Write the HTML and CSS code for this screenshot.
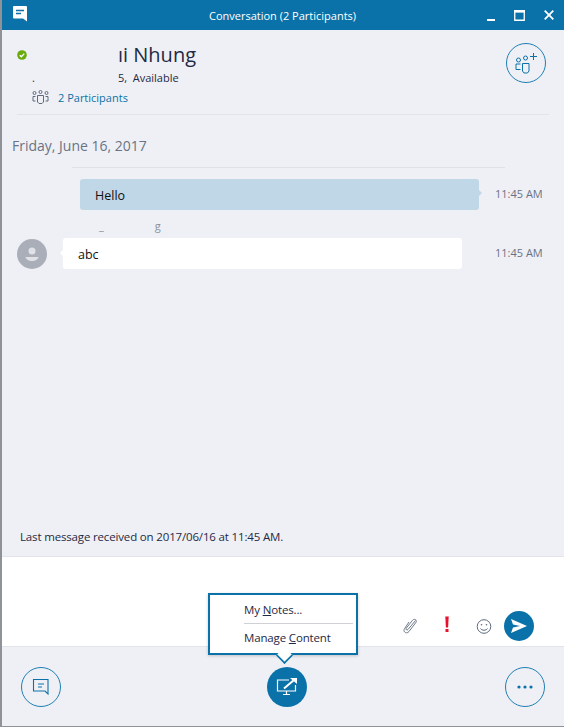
FILE: index.html
```html
<!DOCTYPE html>
<html lang="en">
<head>
  <meta charset="UTF-8">
  <title>Conversation (2 Participants)</title>
  <link rel="stylesheet" href="styles.css">
</head>
<body>
  <div class="window">
    <!-- title bar -->
    <div class="titlebar">
      <svg class="app-icon" width="14" height="16" viewBox="0 0 14 16">
        <path d="M1 0h12a1 1 0 0 1 1 1v14.500l-4-3H1a1 1 0 0 1-1-1V1a1 1 0 0 1 1-1z" fill="#fff"/>
        <path d="M3 4.500h8M3 7.500h5" stroke="#0a72a9" stroke-width="1.300"/>
      </svg>
      <div class="title">Conversation (2 Participants)</div>
      <div class="controls">
        <svg width="9" height="3" viewBox="0 0 9 3"><rect x="1" width="8" height="2" y="1" fill="#fff"/></svg>
        <svg width="11" height="11" viewBox="0 0 11 11"><path d="M.75 1.500h9.500v8.750H.75z" fill="none" stroke="#fff" stroke-width="1.300"/><rect width="11" height="2.500" fill="#fff"/></svg>
        <svg width="10" height="10" viewBox="0 0 10 10"><path d="M.7.700l8.600 8.600M9.300.700L.7 9.300" stroke="#fff" stroke-width="1.800"/></svg>
      </div>
    </div>

    <!-- who is in the conversation -->
    <div class="header">
      <div class="who">
        <div class="name-row">
          <svg class="presence" width="10" height="10" viewBox="0 0 11 11">
            <circle cx="5.500" cy="5.500" r="5.300" fill="#6aaa0d"/>
            <path d="M3 5.700l1.800 1.700L8 4" fill="none" stroke="#fff" stroke-width="1.500"/>
          </svg>
          <span class="name">ıi Nhung</span>
        </div>
        <div class="status-row">
          <span class="speck">.</span>
          <span class="status">5, &nbsp;Available</span>
        </div>
        <div class="people-row">
          <svg width="17" height="14" viewBox="0 0 17 14" fill="none" stroke="#5f6b7c" stroke-width="1">
            <circle cx="2.500" cy="3" r="1.500"/><circle cx="8.500" cy="2" r="1.500"/><circle cx="14.500" cy="3" r="1.500"/>
            <path d="M3.500 6.500H1v4.500h2.500M13.500 6.500H16v4.500h-2.500M5.500 5.500h6V12l-1.500 1.500H7L5.500 12z"/>
          </svg>
          <span>2 Participants</span>
        </div>
      </div>
      <button class="round-btn">
        <svg width="22" height="22" viewBox="0 0 22 22" fill="none" stroke="#0a72a9" stroke-width="1">
          <circle cx="3.500" cy="8" r="2"/><circle cx="10.500" cy="6" r="2"/>
          <path d="M15 4.500h7M18.500 1v7M5.500 12H1v5.500h4.500M7.500 11.500h6.500V19l-1.500 2h-3.500l-1.500-2z"/>
        </svg>
      </button>
    </div>

    <!-- messages -->
    <div class="chat">
      <div class="date">Friday, June 16, 2017</div>
      <div class="date-line"></div>

      <div class="msg-row mine">
        <div class="bubble out">Hello</div>
        <div class="time">11:45 AM</div>
      </div>

      <div class="sender"><span>_</span><span>g</span></div>
      <div class="msg-row theirs">
        <svg class="avatar" width="30" height="30" viewBox="0 0 30 30">
          <circle cx="15" cy="15" r="15" fill="#a9aeb9"/>
          <circle cx="15" cy="12" r="3.500" fill="#dfe1e6"/>
          <path d="M8.500 18h13c-.5 2.500-3.500 4-6.500 4s-6-1.500-6.500-4z" fill="#dfe1e6"/>
        </svg>
        <div class="bubble in">abc</div>
        <div class="time later">11:45 AM</div>
      </div>

      <div class="last-msg">Last message received on 2017/06/16 at 11:45 AM.</div>
    </div>

    <!-- compose box -->
    <div class="compose">
      <svg class="tool" width="20" height="20" viewBox="0 0 20 20" fill="none" stroke="#5f6b7c" stroke-width="0.900">
        <path d="M15.500 4.500L8 13.500c-1 1.200-2.600.2-1.800-1.200l6.300-8c1.800-2.200 5-.2 3.400 2.200l-6.900 9c-2.500 3-6.500.3-4.500-2.800L9 6"/>
      </svg>
      <svg class="tool" width="20" height="20" viewBox="0 0 20 20">
        <path d="M8.300.500h3.400l-.6 11H8.900z" fill="#e8112d"/><rect x="8.500" y="13" width="3" height="3" fill="#e8112d"/>
      </svg>
      <svg class="tool" width="20" height="20" viewBox="0 0 20 20" fill="none" stroke="#5f6b7c" stroke-width="1">
        <circle cx="10" cy="10.500" r="6.800"/>
        <circle cx="7.500" cy="8.700" r=".8" fill="#5f6b7c" stroke="none"/><circle cx="12.500" cy="8.700" r=".8" fill="#5f6b7c" stroke="none"/>
        <path d="M6.500 12.500c1.500 2.300 5.500 2.300 7 0"/>
      </svg>
      <button class="send">
        <svg width="16" height="14" viewBox="0 0 16 14"><path d="M0 0l16 7L0 14l2-5.500 7-1.500-7-1.500z" fill="#fff"/></svg>
      </button>
    </div>

    <!-- bottom buttons -->
    <div class="toolbar">
      <button class="round-btn">
        <svg width="18" height="18" viewBox="0 0 18 18" fill="none" stroke="#0a72a9" stroke-width="1.100">
          <path d="M1.500 1.500h14.500v14.500l-3-3H1.500zM6 6h6M6 9h4"/>
        </svg>
      </button>
      <div class="share">
        <div class="popup">
          <div class="popup-item">My <u>N</u>otes...</div>
          <div class="popup-line"></div>
          <div class="popup-item">Manage <u>C</u>ontent</div>
        </div>
        <button class="round-btn filled">
          <svg width="22" height="20" viewBox="0 0 22 20" fill="none" stroke="#fff">
            <path d="M13 3H1.500v11h18V8" stroke-width="1.200"/>
            <path d="M7 17.500h7M10.500 14v3.500" stroke-width="1.200"/>
            <path d="M8 11.500l10-8.500" stroke-width="2"/>
            <path d="M14 1h7v6z" fill="#fff" stroke="none"/>
          </svg>
        </button>
      </div>
      <button class="round-btn">
        <svg width="16" height="4" viewBox="0 0 16 4" fill="#0a72a9"><circle cx="2" cy="2" r="1.600"/><circle cx="8" cy="2" r="1.600"/><circle cx="14" cy="2" r="1.600"/></svg>
      </button>
    </div>
  </div>
</body>
</html>
```

FILE: styles.css
```css
* {
  box-sizing: border-box;
}
body {
  margin: 0;
  font-family: "Open Sans", "Noto Sans", sans-serif;
  font-size: 12px;
  color: #1f2a44;
}
.window {
  display: flex;
  flex-direction: column;
  height: 727px;
  background-color: #eff0f5;
  border-left: 2px solid #8f9296;
  border-bottom: 1px solid #8f9296;
}

/* title bar */
.titlebar {
  display: grid;
  grid-template-columns: 1fr auto 1fr;
  align-items: center;
  height: 30px;
  padding: 0 10px 0 11px;
  background-color: #0a72a9;
  color: white;
  flex-shrink: 0;
}
.app-icon {
  margin-top: -2px;
}
.title {
  font-size: 11px;
  margin-left: -2px;
}
.controls {
  display: flex;
  justify-content: flex-end;
  align-items: center;
  gap: 19px;
}
.controls svg:first-child {
  margin-top: 9px;
}

/* header */
.header {
  display: flex;
  justify-content: space-between;
  align-items: flex-start;
  height: 85px;
  margin: 0 15px;
  padding: 13px 3px 0 0;
  border-bottom: 1px solid #e2e4ea;
  flex-shrink: 0;
}
.name-row {
  display: flex;
  align-items: center;
  height: 26px;
}
.presence {
  margin-top: -2px;
}
.name {
  margin: -2px 0 0 91px;
  font-size: 20px;
  line-height: 26px;
}
.status-row {
  display: flex;
  height: 18px;
  line-height: 18px;
  font-size: 11px;
}
.speck {
  margin-left: 15px;
}
.status {
  margin-left: 83px;
}
.people-row {
  display: flex;
  align-items: center;
  gap: 9px;
  height: 18px;
  margin: 1px 0 0 15px;
  font-size: 11px;
  color: #0a72a9;
}
.round-btn {
  display: flex;
  align-items: center;
  justify-content: center;
  width: 40px;
  height: 40px;
  padding: 0;
  background: none;
  border: 1.500px solid #1f7fb3;
  border-radius: 50%;
}
.round-btn.filled {
  background-color: #0a72a9;
  border: none;
}

/* messages */
.chat {
  display: flex;
  flex-direction: column;
  flex: 1;
  padding-top: 21px;
}
.date {
  margin-left: 10px;
  font-size: 14px;
  line-height: 20px;
  color: #6a7385;
}
.date-line {
  height: 1px;
  margin: 11px 59px 0 70px;
  background-color: #dfe1e7;
}
.msg-row {
  display: flex;
  align-items: center;
}
.mine {
  margin: 11px 0 0 78px;
}
.theirs {
  margin-left: 15px;
}
.bubble {
  position: relative;
  width: 399px;
  height: 31px;
  padding: 0 15px;
  border-radius: 3px;
  font-size: 12.500px;
  line-height: 33px;
  color: #111;
}
.bubble.out {
  background-color: #bfd7e6;
}
.bubble.out::after {
  content: "";
  position: absolute;
  top: 11px;
  right: -3px;
  border-left: 3px solid #bfd7e6;
  border-top: 3px solid transparent;
  border-bottom: 3px solid transparent;
}
.bubble.in {
  margin-left: 16px;
  background-color: white;
}
.bubble.in::before {
  content: "";
  position: absolute;
  top: 12px;
  left: -3px;
  border-right: 3px solid white;
  border-top: 3px solid transparent;
  border-bottom: 3px solid transparent;
}
.time {
  margin: -2px 0 0 16px;
  font-size: 11px;
  color: #6a7385;
}
.time.later {
  margin-left: 33px;
}
.sender {
  display: flex;
  gap: 51px;
  height: 28px;
  padding: 9px 0 0 97px;
  font-size: 11px;
  line-height: 14px;
  color: #8a919e;
}
.last-msg {
  margin: auto 0 11px 18px;
  font-size: 11.500px;
  line-height: 16px;
  letter-spacing: -0.160px;
}

/* compose box */
.compose {
  display: flex;
  align-items: center;
  justify-content: flex-end;
  gap: 17px;
  height: 91px;
  padding: 54px 30px 5px 0;
  background-color: white;
  border-top: 1px solid #e2e4ea;
  border-bottom: 1px solid #e2e4ea;
  flex-shrink: 0;
}
.send {
  display: flex;
  align-items: center;
  justify-content: center;
  width: 30px;
  height: 30px;
  margin-left: -7px;
  padding: 0;
  background-color: #0a72a9;
  border: none;
  border-radius: 50%;
}

/* bottom buttons */
.toolbar {
  display: flex;
  justify-content: space-between;
  height: 79px;
  padding: 20px 19px 0 19px;
  flex-shrink: 0;
}
.share {
  position: relative;
  margin-left: 8px;
}
.popup {
  position: absolute;
  top: -74px;
  left: -59px;
  width: 150px;
  height: 62px;
  padding: 6px 3px 0 34px;
  background-color: white;
  border: 2px solid #0a72a9;
  box-shadow: 0 1px 3px rgba(0, 0, 0, 0.2);
  font-size: 11.500px;
  letter-spacing: -0.150px;
}
.popup::after {
  content: "";
  position: absolute;
  left: 67px;
  bottom: -10px;
  width: 13px;
  height: 13px;
  background-color: white;
  border-right: 2px solid #0a72a9;
  border-bottom: 2px solid #0a72a9;
  transform: rotate(45deg) scale(0.8);
}
.popup-item {
  height: 18px;
  line-height: 18px;
}
.popup-line {
  height: 1px;
  margin: 4px 0 5px;
  background-color: #cfd1d6;
}
```
